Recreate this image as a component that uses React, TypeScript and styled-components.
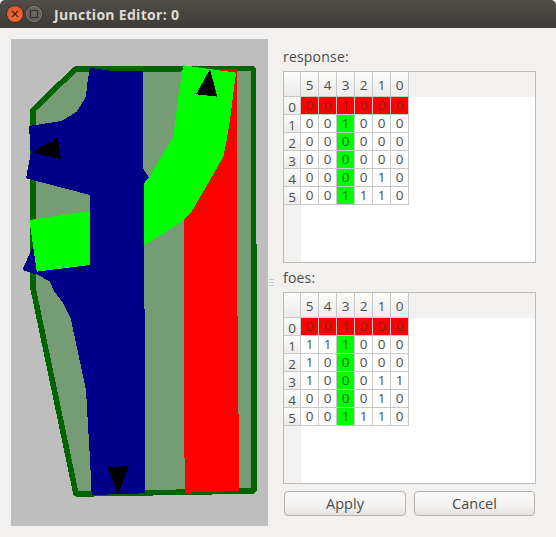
import * as React from "react";
import styled, { createGlobalStyle } from "styled-components";

const GlobalStyle = createGlobalStyle`
  html, body {
    margin: 0;
    padding: 0;
    background: #f2f1f0;
  }
`;

const FONT = `"Open Sans", "Noto Sans", sans-serif`;

type Tint = "red" | "green" | undefined;

const responseRows = ["001000", "001000", "000000", "000000", "000010", "001110"];
const foesRows = ["001000", "111000", "100000", "100011", "000010", "001110"];

const columns = ["5", "4", "3", "2", "1", "0"];

const JunctionShape: React.FC = () => (
  <Canvas viewBox="11 39 257 487" shapeRendering="crispEdges">
    <polygon
      points="75.5,69 253.5,68.5 254,491 76,494 33,288 33,110"
      fill="#769c76"
      stroke="#006400"
      strokeWidth="5.6"
      strokeLinejoin="bevel"
    />
    <polygon
      points="210,69 237.3,69.3 237,280 238,350 239,477 239,491 185,492.7 184,423 184,220"
      fill="#ff0000"
    />
    <polygon
      points="90,67.7 110,70.7 143,70.7 143,168.3 149,177.3 144,183.3 145,433.3 145,493.3 91.7,495 91,480 89.3,446.7 87.3,413.3 86,390 81.7,370 70.7,318.3 63.3,303.3 53.3,290 50,281.7 38.3,275 22.3,270 32.7,246.7 40,240 90,240 90,195 26,178.3 30.7,153.3 29,126 61.7,121 76.7,111.7 86,96.7 87.3,83.3"
      fill="#000088"
    />
    <polygon
      points="183.3,65.3 236,72.7 230,120 226.7,140 223.3,156.7 210,180 191.7,211.7 184,220 144,245.7 144,183.3 149,177.3 173.3,136.7 178.3,96.7"
      fill="#00ff00"
    />
    <polygon points="29.3,220 90,211 90,265 36.7,271.7" fill="#00ff00" />
    <polygon points="210,69 217.3,96.7 196,94.3" fill="#000000" />
    <polygon points="57.7,137.7 61,159.3 31.7,152.3" fill="#000000" />
    <polygon points="107,467.3 129,466 118.3,493.3" fill="#000000" />
  </Canvas>
);

const Matrix: React.FC<{ rows: string[] }> = ({ rows }) => (
  <Frame>
    <Corner />
    <ColumnHeaders>
      {columns.map((c) => (
        <ColumnHeader key={c}>{c}</ColumnHeader>
      ))}
    </ColumnHeaders>
    <RowHeaders>
      {rows.map((_, i) => (
        <RowHeader key={i}>
          <RowDigit>{i}</RowDigit>
        </RowHeader>
      ))}
    </RowHeaders>
    <Cells>
      {rows.map((row, r) =>
        row.split("").map((v, c) => {
          const tint: Tint = r === 0 ? "red" : c === 2 ? "green" : undefined;
          return (
            <Cell key={`${r}-${c}`} $tint={tint}>
              {v}
            </Cell>
          );
        })
      )}
    </Cells>
  </Frame>
);

export default function App() {
  return (
    <Window>
      <GlobalStyle />
      <TitleBar>
        <CloseButton>
          <svg width="8" height="8" viewBox="0 0 8 8">
            <path d="M1 1 L7 7 M7 1 L1 7" stroke="#5a1a08" strokeWidth="1.4" />
          </svg>
        </CloseButton>
        <MaximizeButton>
          <MaximizeGlyph />
        </MaximizeButton>
        <Title>Junction Editor: 0</Title>
      </TitleBar>
      <Body>
        <JunctionShape />
        <Splitter>
          <SplitterGrip />
          <SplitterGrip />
          <SplitterGrip />
        </Splitter>
        <SidePanel>
          <Label>response:</Label>
          <Matrix rows={responseRows} />
          <Label>foes:</Label>
          <Matrix rows={foesRows} />
          <Buttons>
            <Button>Apply</Button>
            <Button>Cancel</Button>
          </Buttons>
        </SidePanel>
      </Body>
    </Window>
  );
}

const Window = styled.div`
  width: 556px;
  height: 537px;
  display: flex;
  flex-direction: column;
  background: #f2f1f0;
  font-family: ${FONT};
  overflow: hidden;
`;

const TitleBar = styled.div`
  height: 28px;
  flex: none;
  display: flex;
  align-items: center;
  padding-left: 7px;
  box-sizing: border-box;
  background: linear-gradient(#514e48, #3c3b37);
  border-radius: 5px 5px 0 0;
`;

const CloseButton = styled.div`
  width: 16px;
  height: 16px;
  border-radius: 50%;
  display: flex;
  align-items: center;
  justify-content: center;
  background: radial-gradient(circle at 50% 60%, #f0764a, #d9481c);
  box-shadow: 0 0 0 1px #3a2a22;
`;

const MaximizeButton = styled.div`
  width: 16px;
  height: 16px;
  margin-left: 3px;
  border-radius: 50%;
  display: flex;
  align-items: center;
  justify-content: center;
  box-sizing: border-box;
  border: 1px solid #85827c;
  background: radial-gradient(circle at 50% 40%, #6c6a64, #565450);
  box-shadow: 0 0 0 1px #3f3d38;
`;

const MaximizeGlyph = styled.div`
  width: 8px;
  height: 8px;
  box-sizing: border-box;
  border: 1.5px solid #2f2e2a;
  border-radius: 1px;
`;

const Title = styled.div`
  margin-left: 12px;
  font-size: 14px;
  font-weight: 700;
  letter-spacing: 0.3px;
  color: #dfdbd2;
  white-space: nowrap;
`;

const Body = styled.div`
  flex: 1;
  display: flex;
  align-items: flex-start;
  padding: 11px 0 0 11px;
`;

const Canvas = styled.svg`
  width: 257px;
  height: 487px;
  flex: none;
  display: block;
  background: #bebebe;
`;

const Splitter = styled.div`
  width: 15px;
  height: 487px;
  flex: none;
  display: flex;
  flex-direction: column;
  justify-content: center;
  gap: 2px;
  padding-left: 1px;
  box-sizing: border-box;
`;

const SplitterGrip = styled.div`
  width: 5px;
  height: 1px;
  background: #cfcdca;
`;

const SidePanel = styled.div`
  width: 253px;
  flex: none;
  margin-top: 3px;
  display: flex;
  flex-direction: column;
`;

const Label = styled.div`
  height: 29px;
  line-height: 29px;
  font-size: 14px;
  letter-spacing: 0.2px;
  color: #4c4c4c;
`;

const Frame = styled.div`
  height: 192px;
  box-sizing: border-box;
  border: 1px solid #bdbbb8;
  background: #ffffff;
  display: grid;
  grid-template-columns: 17px 1fr;
  grid-template-rows: 25px 1fr;
`;

const Corner = styled.div`
  background: linear-gradient(#fbfbfa, #ecebe9);
  border-right: 1px solid #c8c8c8;
  border-bottom: 1px solid #c8c8c8;
`;

const ColumnHeaders = styled.div`
  display: flex;
  background: #f2f1f0;
`;

const ColumnHeader = styled.div`
  width: 18px;
  height: 25px;
  box-sizing: border-box;
  border-right: 1px solid #c8c8c8;
  border-bottom: 1px solid #c8c8c8;
  background: linear-gradient(#fbfbfa, #ecebe9);
  font-size: 13.5px;
  line-height: 26px;
  text-align: center;
  color: #4c4c4c;
`;

const RowHeaders = styled.div`
  background: #f2f1f0;
`;

const RowHeader = styled.div`
  height: 18px;
  box-sizing: border-box;
  border-right: 1px solid #c8c8c8;
  border-bottom: 1px solid #c8c8c8;
  background: linear-gradient(#fbfbfa, #ecebe9);
`;

const RowDigit = styled.div`
  height: 15px;
  overflow: hidden;
  font-size: 13.5px;
  line-height: 20px;
  text-align: center;
  color: #4c4c4c;
`;

const Cells = styled.div`
  display: grid;
  grid-template-columns: repeat(6, 18px);
  grid-auto-rows: 18px;
  align-content: start;
`;

const tintBackground = (tint: Tint) =>
  tint === "red" ? "#ff0000" : tint === "green" ? "#00ff00" : "#ffffff";

const tintText = (tint: Tint) =>
  tint === "red" ? "#7c2a1e" : tint === "green" ? "#1f6b1f" : "#4c4c4c";

const Cell = styled.div<{ $tint?: Tint }>`
  box-sizing: border-box;
  border-right: 1px solid #c8c8c8;
  border-bottom: 1px solid #c8c8c8;
  background: ${(p) => tintBackground(p.$tint)};
  color: ${(p) => tintText(p.$tint)};
  font-size: 13.5px;
  line-height: 17px;
  text-align: center;
`;

const Buttons = styled.div`
  display: flex;
  gap: 8px;
  margin-top: 7px;
  padding-left: 1px;
`;

const Button = styled.button`
  width: 122px;
  height: 25px;
  padding: 0;
  box-sizing: border-box;
  border: 1px solid #b5b2ac;
  border-radius: 4px;
  background: linear-gradient(#fafafa, #f4f3f2 55%, #e4e3e1);
  font-family: ${FONT};
  font-size: 14.5px;
  color: #4c4c4c;

  & + & {
    width: 121px;
  }
`;
